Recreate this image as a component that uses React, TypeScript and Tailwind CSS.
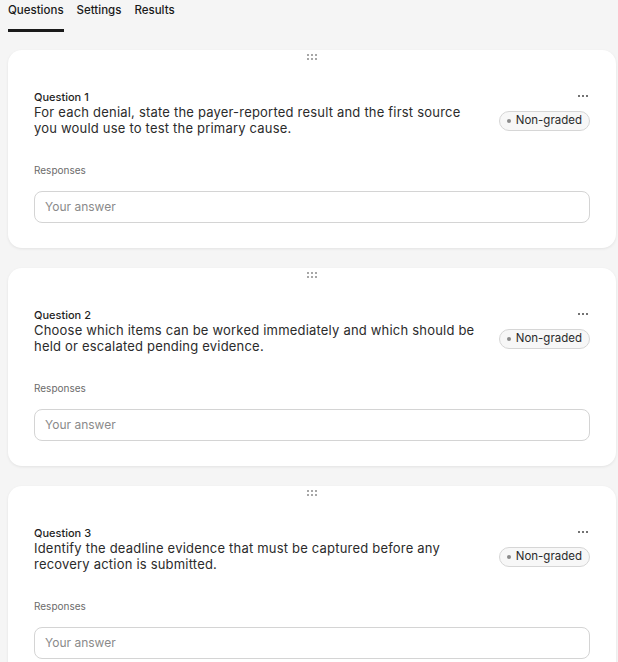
import React from "react";

const questions = [
  {
    n: 1,
    text: "For each denial, state the payer-reported result and the first source you would use to test the primary cause.",
  },
  {
    n: 2,
    text: "Choose which items can be worked immediately and which should be held or escalated pending evidence.",
  },
  {
    n: 3,
    text: "Identify the deadline evidence that must be captured before any recovery action is submitted.",
  },
];

function DragHandle() {
  return (
    <div className="grid grid-cols-3 gap-x-[2px] gap-y-[2px] w-[11px]">
      {[0, 1, 2, 3, 4, 5].map((i) => (
        <span key={i} className="block w-[2px] h-[2px] rounded-full bg-[#8a8a8a]" />
      ))}
    </div>
  );
}

function Card({ n, text }: { n: number; text: string }) {
  return (
    <div className="w-[608px] bg-white rounded-[14px] shadow-[0_1px_3px_rgba(0,0,0,0.08)] px-[26px] pt-[4px] pb-[25px]">
      <div className="flex justify-center h-[7px] items-start">
        <DragHandle />
      </div>
      <div className="mt-[29px] flex justify-between gap-4">
        <div className="w-[445px]">
          <div className="text-[11px] leading-[14px] font-medium text-[#1f1f1f]">Question {n}</div>
          <div className="text-[13px] leading-[16px] tracking-[0.2px] text-[#2b2b2b]">{text}</div>
        </div>
        <div className="flex flex-col items-end">
          <div className="flex gap-[2px] mr-[2px] mt-[4px] h-[4px] items-center">
            <span className="block w-[2px] h-[2px] rounded-full bg-[#444]" />
            <span className="block w-[2px] h-[2px] rounded-full bg-[#444]" />
            <span className="block w-[2px] h-[2px] rounded-full bg-[#444]" />
          </div>
          <div className="mt-[13px] h-[20px] flex items-center gap-[5px] pl-[7px] pr-[7px] rounded-full border border-[#d6d6d6] bg-[#f7f7f7] text-[11.5px] text-[#2a2a2a]">
            <span className="block w-[4px] h-[4px] rounded-full bg-[#8a8a8a]" />
            Non-graded
          </div>
        </div>
      </div>
      <div className="mt-[28px] text-[10px] leading-[12px] text-[#6b6b6b]">Responses</div>
      <div className="mt-[15px] h-[32px] rounded-[8px] border border-[#d4d4d4] flex items-center px-[10px] text-[12px] text-[#8a8a8a]">
        Your answer
      </div>
    </div>
  );
}

export default function App() {
  return (
    <div
      className="min-h-[662px] bg-[#f5f5f5] overflow-hidden"
      style={{ fontFamily: "Inter, 'Noto Sans', sans-serif" }}
    >
      <div className="flex gap-[13px] pl-2 pt-[3px] text-[11.5px] font-medium text-[#1a1a1a]">
        <div className="flex flex-col">
          <span className="leading-[15px]">Questions</span>
          <span className="mt-[11px] h-[3px] bg-[#1a1a1a] block" />
        </div>
        <span className="leading-[15px]">Settings</span>
        <span className="leading-[15px]">Results</span>
      </div>
      <div className="pl-2 mt-[18px] flex flex-col gap-[20px]">
        {questions.map((q) => (
          <Card key={q.n} n={q.n} text={q.text} />
        ))}
      </div>
    </div>
  );
}
